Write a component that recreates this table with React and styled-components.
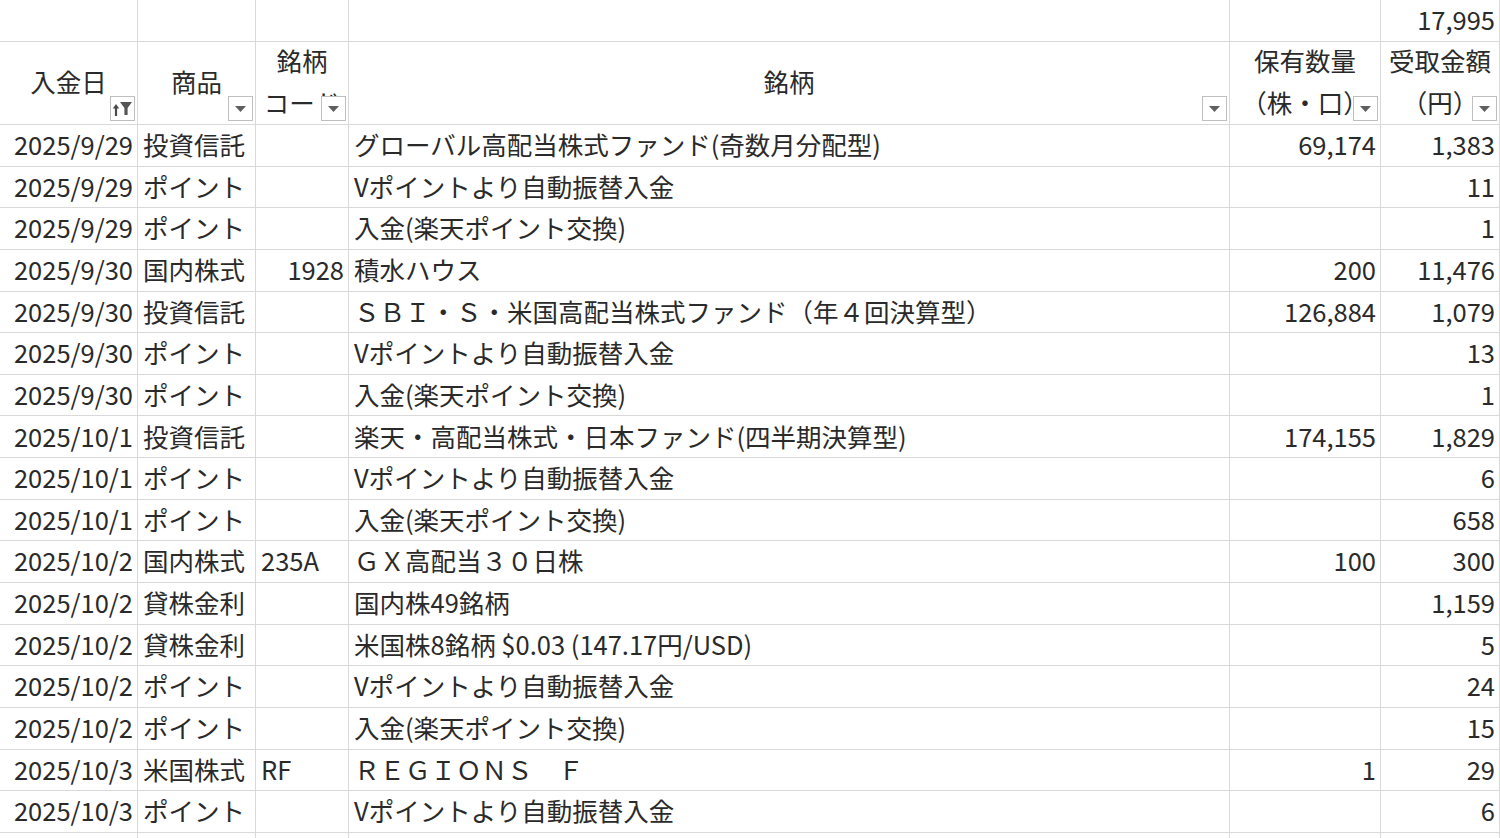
import React from 'react';
import styled, { createGlobalStyle } from 'styled-components';

const GlobalStyle = createGlobalStyle`
  html, body {
    margin: 0;
    padding: 0;
    background: #ffffff;
    overflow: hidden;
  }
  body {
    font-family: "Noto Sans CJK JP", "Noto Sans", sans-serif;
    color: #2a2a2a;
  }
`;

const COLS = '138px 118px 93px 881px 151px 119px';

const Sheet = styled.div`
  display: grid;
  grid-template-columns: ${COLS};
  grid-template-rows: 42px 83px;
  grid-auto-rows: 41.65px;
  width: 1500px;
  height: 838px;
  overflow: hidden;
  font-size: 25.5px;
`;

const Cell = styled.div`
  box-sizing: border-box;
  border-right: 1px solid #d9d9d9;
  border-bottom: 1px solid #d9d9d9;
  display: flex;
  align-items: center;
  justify-content: ${(p) => (p.$right ? 'flex-end' : 'flex-start')};
  padding: 0 ${(p) => (p.$right ? '4px' : '0')} 3px ${(p) => (p.$right ? '0' : '5px')};
  white-space: nowrap;
  overflow: hidden;
  line-height: 1;
`;

const HeadCell = styled.div`
  position: relative;
  box-sizing: border-box;
  border-right: 1px solid #d9d9d9;
  border-bottom: 1px solid #d9d9d9;
  display: flex;
  flex-direction: column;
  align-items: center;
  justify-content: center;
  padding-bottom: 4px;
  line-height: 42px;
  overflow: hidden;
  white-space: nowrap;
`;

const HeadLine = styled.span`
  display: block;
`;

const FilterBtn = styled.div`
  position: absolute;
  right: 2px;
  bottom: 3px;
  width: 25px;
  height: 25px;
  box-sizing: border-box;
  border: 1px solid #bfbfbf;
  background: #ffffff;
  display: flex;
  align-items: center;
  justify-content: center;
`;

const Arrow = () => (
  <svg width="11" height="6" viewBox="0 0 11 6">
    <path d="M0 0 H11 L5.5 6 Z" fill="#5f5f5f" />
  </svg>
);

const SortFilter = () => (
  <svg width="21" height="17" viewBox="0 0 21 17">
    <path d="M4 16 V7" stroke="#4a4a4a" strokeWidth="2.2" />
    <path d="M0.8 8.5 L4 4 L7.2 8.5 Z" fill="#4a4a4a" />
    <path d="M8 2 H20 L15.6 8 V15 H12.4 V8 Z" fill="#555555" />
  </svg>
);

const Header = ({ lines, sort }) => (
  <HeadCell>
    {lines.map((l) => (
      <HeadLine key={l}>{l}</HeadLine>
    ))}
    <FilterBtn>{sort ? <SortFilter /> : <Arrow />}</FilterBtn>
  </HeadCell>
);

const rows = [
  ['2025/9/29', '投資信託', '', 'グローバル高配当株式ファンド(奇数月分配型)', '69,174', '1,383'],
  ['2025/9/29', 'ポイント', '', 'Vポイントより自動振替入金', '', '11'],
  ['2025/9/29', 'ポイント', '', '入金(楽天ポイント交換)', '', '1'],
  ['2025/9/30', '国内株式', '1928', '積水ハウス', '200', '11,476'],
  ['2025/9/30', '投資信託', '', 'ＳＢＩ・Ｓ・米国高配当株式ファンド（年４回決算型）', '126,884', '1,079'],
  ['2025/9/30', 'ポイント', '', 'Vポイントより自動振替入金', '', '13'],
  ['2025/9/30', 'ポイント', '', '入金(楽天ポイント交換)', '', '1'],
  ['2025/10/1', '投資信託', '', '楽天・高配当株式・日本ファンド(四半期決算型)', '174,155', '1,829'],
  ['2025/10/1', 'ポイント', '', 'Vポイントより自動振替入金', '', '6'],
  ['2025/10/1', 'ポイント', '', '入金(楽天ポイント交換)', '', '658'],
  ['2025/10/2', '国内株式', '235A', 'ＧＸ高配当３０日株', '100', '300'],
  ['2025/10/2', '貸株金利', '', '国内株49銘柄', '', '1,159'],
  ['2025/10/2', '貸株金利', '', '米国株8銘柄 $0.03 (147.17円/USD)', '', '5'],
  ['2025/10/2', 'ポイント', '', 'Vポイントより自動振替入金', '', '24'],
  ['2025/10/2', 'ポイント', '', '入金(楽天ポイント交換)', '', '15'],
  ['2025/10/3', '米国株式', 'RF', 'ＲＥＧＩＯＮＳ　Ｆ', '1', '29'],
  ['2025/10/3', 'ポイント', '', 'Vポイントより自動振替入金', '', '6'],
  ['', '', '', '', '', ''],
];

const isNumeric = (v) => /^[0-9,]+$/.test(v);

const App = () => (
  <>
    <GlobalStyle />
    <Sheet>
      <Cell />
      <Cell />
      <Cell />
      <Cell />
      <Cell />
      <Cell $right>17,995</Cell>

      <Header lines={['入金日']} sort />
      <Header lines={['商品']} />
      <Header lines={['銘柄', 'コード']} />
      <Header lines={['銘柄']} />
      <Header lines={['保有数量', '（株・口）']} />
      <Header lines={['受取金額', '（円）']} />

      {rows.map((r, i) =>
        r.map((v, j) => (
          <Cell key={`${i}-${j}`} $right={j === 0 || isNumeric(v)}>
            {v}
          </Cell>
        ))
      )}
    </Sheet>
  </>
);

export default App;
